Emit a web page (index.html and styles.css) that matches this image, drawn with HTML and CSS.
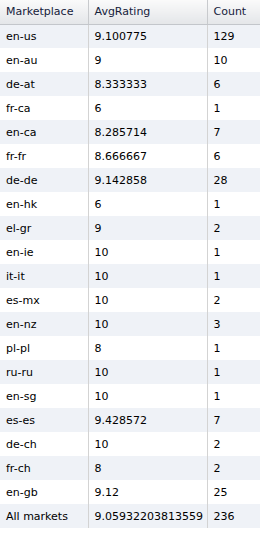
FILE: index.html
```html
<!DOCTYPE html>
<html>
<head>
<meta charset="utf-8">
<link rel="stylesheet" href="styles.css">
</head>
<body>
<table class="grid">
<colgroup><col class="c1"><col class="c2"><col class="c3"></colgroup>
<thead>
<tr><th>Marketplace</th><th>AvgRating</th><th>Count</th></tr>
</thead>
<tbody>
<tr><td>en-us</td><td>9.100775</td><td>129</td></tr>
<tr><td>en-au</td><td>9</td><td>10</td></tr>
<tr><td>de-at</td><td>8.333333</td><td>6</td></tr>
<tr><td>fr-ca</td><td>6</td><td>1</td></tr>
<tr><td>en-ca</td><td>8.285714</td><td>7</td></tr>
<tr><td>fr-fr</td><td>8.666667</td><td>6</td></tr>
<tr><td>de-de</td><td>9.142858</td><td>28</td></tr>
<tr><td>en-hk</td><td>6</td><td>1</td></tr>
<tr><td>el-gr</td><td>9</td><td>2</td></tr>
<tr><td>en-ie</td><td>10</td><td>1</td></tr>
<tr><td>it-it</td><td>10</td><td>1</td></tr>
<tr><td>es-mx</td><td>10</td><td>2</td></tr>
<tr><td>en-nz</td><td>10</td><td>3</td></tr>
<tr><td>pl-pl</td><td>8</td><td>1</td></tr>
<tr><td>ru-ru</td><td>10</td><td>1</td></tr>
<tr><td>en-sg</td><td>10</td><td>1</td></tr>
<tr><td>es-es</td><td>9.428572</td><td>7</td></tr>
<tr><td>de-ch</td><td>10</td><td>2</td></tr>
<tr><td>fr-ch</td><td>8</td><td>2</td></tr>
<tr><td>en-gb</td><td>9.12</td><td>25</td></tr>
<tr><td>All markets</td><td>9.05932203813559</td><td>236</td></tr>
</tbody>
</table>
</body>
</html>
```
FILE: styles.css
```css
html, body {
  margin: 0;
  padding: 0;
  background: #fff;
}
.grid {
  width: 260px;
  border-collapse: collapse;
  table-layout: fixed;
  font-family: "DejaVu Sans", Verdana, sans-serif;
  font-size: 11px;
  color: #000;
}
.c1 { width: 88px; }
.c2 { width: 119px; }
.c3 { width: 53px; }
.grid th {
  height: 24px;
  padding: 0 0 0 6px;
  text-align: left;
  font-weight: normal;
  color: #15213b;
  background: linear-gradient(#fafafa, #e4e6e9);
  border-bottom: 1px solid #c3c6cb;
  border-right: 1px solid #c8cacd;
  box-sizing: border-box;
}
.grid td {
  height: 24px;
  padding: 0 0 0 6px;
  border-right: 1px solid #d3d3d3;
  box-sizing: border-box;
  white-space: nowrap;
  overflow: hidden;
}
.grid th:last-child, .grid td:last-child {
  border-right: none;
}
.grid tbody tr:nth-child(odd) td {
  background: #eff2f7;
}
```
